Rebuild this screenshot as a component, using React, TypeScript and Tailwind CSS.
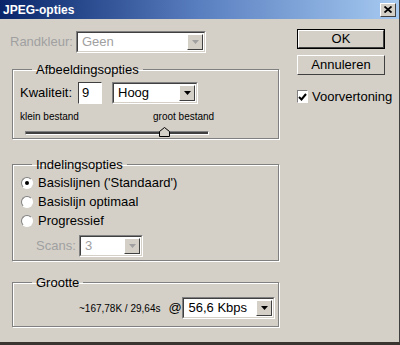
const font = { fontFamily: '"Liberation Sans", Arial, sans-serif' };

function Arrow({ disabled }: { disabled?: boolean }) {
  return (
    <div className="flex h-full w-[16px] items-center justify-center border border-t-white border-l-white border-r-[#404040] border-b-[#404040] bg-[#d4d0c8]">
      <svg width="7" height="4" viewBox="0 0 7 4">
        <path d="M0 0h7L3.5 4z" fill={disabled ? "#a0a0a0" : "#000"} />
      </svg>
    </div>
  );
}

function Select({ value, w, disabled }: { value: string; w: string; disabled?: boolean }) {
  return (
    <div
      className={`flex h-[22px] ${w} items-center border border-t-[#808080] border-l-[#808080] border-r-white border-b-white`}
    >
      <div className="flex h-full flex-1 items-center border border-t-[#404040] border-l-[#404040] border-r-[#d4d0c8] border-b-[#d4d0c8] bg-white pl-[4px] pr-[1px] py-[1px]">
        <span className={`flex-1 whitespace-nowrap text-[13px] ${disabled ? "text-[#a0a0a0]" : "text-black"}`}>{value}</span>
        <Arrow disabled={disabled} />
      </div>
    </div>
  );
}

function Group({ title, className, children }: { title: string; className: string; children: React.ReactNode }) {
  return (
    <fieldset
      className={`border border-[#808080] shadow-[inset_1px_1px_0_#fff,1px_1px_0_#fff] ${className}`}
    >
      <legend className="ml-[11px] px-[4px] text-[13px] leading-none text-black">{title}</legend>
      {children}
    </fieldset>
  );
}

function Radio({ label, checked }: { label: string; checked?: boolean }) {
  return (
    <div className="flex h-[19px] items-center">
      <div className="ml-[8px] flex h-[12px] w-[12px] items-center justify-center rounded-full border border-t-[#808080] border-l-[#808080] border-r-white border-b-white bg-white">
        {checked && <div className="h-[4px] w-[4px] rounded-full bg-black" />}
      </div>
      <span className="ml-[5px] whitespace-nowrap text-[13px] text-black">{label}</span>
    </div>
  );
}

export default function App() {
  return (
    <div className="h-[345px] w-[400px] bg-[#3a3530]" style={font}>
      <div className="flex h-[342px] w-[400px] flex-col border-r border-[#404040] bg-[#d4d0c8]">
        <div className="flex h-[19px] items-center justify-between bg-gradient-to-r from-[#0a246a] via-[#5a7fc0] to-[#a6caf0] pl-[3px] pr-[3px]">
          <span className="text-[12px] font-bold text-white">JPEG-opties</span>
          <div className="flex h-[14px] w-[16px] items-center justify-center border border-t-white border-l-white border-r-[#404040] border-b-[#404040] bg-[#d4d0c8]">
            <svg width="8" height="7" viewBox="0 0 8 7">
              <path d="M0.5 0.5L7.5 6.5M7.5 0.5L0.5 6.5" stroke="#000" strokeWidth="1.8" />
            </svg>
          </div>
        </div>

        <div className="flex flex-1">
          <div className="ml-[12px] flex w-[267px] flex-col">
            <div className="mt-[12px] flex items-center">
              <span className="-ml-[2px] w-[66px] whitespace-nowrap text-[13px] text-[#a0a0a0]">Randkleur:</span>
              <Select value="Geen" w="w-[130px]" disabled />
            </div>

            <Group title="Afbeeldingsopties" className="mt-[10px] h-[76px] px-[8px]">
              <div className="-mx-[8px] mt-[6px] flex items-center">
                <span className="ml-[7px] w-[58px] whitespace-nowrap text-[13px] text-black">Kwaliteit:</span>
                <div className="flex h-[22px] w-[24px] items-center border border-t-[#404040] border-l-[#404040] border-r-white border-b-white bg-white pl-[3px] text-[13px]">
                  9
                </div>
                <div className="ml-[10px]">
                  <Select value="Hoog" w="w-[86px]" />
                </div>
              </div>
              <div className="-mx-[8px] mt-[5px] flex whitespace-nowrap text-[10px] text-black">
                <span className="ml-[7px] w-[133px]">klein bestand</span>
                <span>groot bestand</span>
              </div>
              <div className="relative ml-[4px] mt-[7px] h-[4px] w-[184px] border border-t-[#808080] border-l-[#808080] border-r-white border-b-white bg-[#404040]">
                <svg className="absolute left-[133px] top-[-5px]" width="11" height="10" viewBox="0 0 11 10">
                  <path d="M0.5 9.5V4.5L5.5 0.5L10.5 4.5V9.5Z" fill="#d4d0c8" stroke="#000" />
                </svg>
              </div>
            </Group>

            <Group title="Indelingsopties" className="mt-[19px] h-[103px] px-[8px]">
              <div className="-mx-[8px] mt-[2px] flex flex-col">
                <Radio label="Basislijnen ('Standaard')" checked />
                <Radio label="Basislijn optimaal" />
                <Radio label="Progressief" />
              </div>
              <div className="-mx-[8px] mt-[5px] flex items-center">
                <span className="ml-[23px] w-[43px] text-[13px] text-[#a0a0a0]">Scans:</span>
                <Select value="3" w="w-[64px]" disabled />
              </div>
            </Group>

            <Group title="Grootte" className="mt-[15px] h-[51px] px-[8px]">
              <div className="-mx-[8px] mt-[8px] flex items-center">
                <span className="ml-[66px] whitespace-nowrap text-[10px] text-black">~167,78K / 29,64s</span>
                <span className="ml-[8px] w-[14px] text-[13px] text-black">@</span>
                <Select value="56,6 Kbps" w="w-[93px]" />
              </div>
            </Group>
          </div>

          <div className="ml-[18px] flex w-[88px] flex-col">
            <div className="mt-[10px] h-[20px] border border-black">
              <div className="flex h-full items-center justify-center border border-t-white border-l-white border-r-[#404040] border-b-[#404040] text-[13px] text-black">
                OK
              </div>
            </div>
            <div className="mt-[6px] flex h-[20px] items-center justify-center border border-t-white border-l-white border-r-[#404040] border-b-[#404040] text-[13px] text-black">
              Annuleren
            </div>
            <div className="mt-[12px] flex items-center">
              <div className="flex h-[13px] w-[13px] items-center justify-center border border-t-[#808080] border-l-[#808080] border-r-white border-b-white bg-white">
                <svg width="9" height="8" viewBox="0 0 9 8">
                  <path d="M1 4L3.5 6.5L8 1" stroke="#000" strokeWidth="2" fill="none" />
                </svg>
              </div>
              <span className="ml-[4px] whitespace-nowrap text-[13px] text-black">Voorvertoning</span>
            </div>
          </div>
        </div>
      </div>
    </div>
  );
}
